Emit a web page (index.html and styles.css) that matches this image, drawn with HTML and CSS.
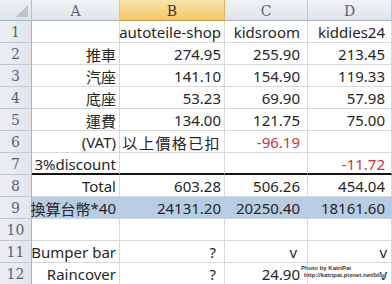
FILE: index.html
```html
<!DOCTYPE html>
<html>
<head>
<meta charset="utf-8">
<link rel="stylesheet" href="styles.css">
</head>
<body>
<div class="sheet">
  <div class="corner"><span class="tri"></span></div>
  <div class="colhead">A</div>
  <div class="colhead active">B</div>
  <div class="colhead">C</div>
  <div class="colhead">D</div>

  <div class="rowhead">1</div>
  <div class="cell"></div>
  <div class="cell">autoteile-shop</div>
  <div class="cell padc">kidsroom</div>
  <div class="cell padd">kiddies24</div>

  <div class="rowhead">2</div>
  <div class="cell"><span class="cjk">推車</span></div>
  <div class="cell">274.95</div>
  <div class="cell padc">255.90</div>
  <div class="cell padd">213.45</div>

  <div class="rowhead">3</div>
  <div class="cell"><span class="cjk">汽座</span></div>
  <div class="cell">141.10</div>
  <div class="cell padc">154.90</div>
  <div class="cell padd">119.33</div>

  <div class="rowhead">4</div>
  <div class="cell"><span class="cjk">底座</span></div>
  <div class="cell">53.23</div>
  <div class="cell padc">69.90</div>
  <div class="cell padd">57.98</div>

  <div class="rowhead">5</div>
  <div class="cell"><span class="cjk">運費</span></div>
  <div class="cell">134.00</div>
  <div class="cell padc">121.75</div>
  <div class="cell padd">75.00</div>

  <div class="rowhead">6</div>
  <div class="cell">(VAT)</div>
  <div class="cell"><span class="cjk wide">以上價格已扣</span></div>
  <div class="cell padc red">-96.19</div>
  <div class="cell padd"></div>

  <div class="rowhead">7</div>
  <div class="cell thick">3%discount</div>
  <div class="cell thick"></div>
  <div class="cell padc thick"></div>
  <div class="cell padd thick red">-11.72</div>

  <div class="rowhead">8</div>
  <div class="cell">Total</div>
  <div class="cell">603.28</div>
  <div class="cell padc">506.26</div>
  <div class="cell padd">454.04</div>

  <div class="rowhead">9</div>
  <div class="cell sel"><span class="cjk">換算台幣</span>*40</div>
  <div class="cell sel">24131.20</div>
  <div class="cell padc sel">20250.40</div>
  <div class="cell padd sel">18161.60</div>

  <div class="rowhead">10</div>
  <div class="cell"></div>
  <div class="cell"></div>
  <div class="cell padc"></div>
  <div class="cell padd"></div>

  <div class="rowhead">11</div>
  <div class="cell">Bumper bar</div>
  <div class="cell padq">?</div>
  <div class="cell padv">v</div>
  <div class="cell padv2">v</div>

  <div class="rowhead">12</div>
  <div class="cell">Raincover</div>
  <div class="cell padq">?</div>
  <div class="cell padc">24.90</div>
  <div class="cell padv2">v</div>

  <div class="watermark">
    <div class="wm1">Photo by KatriPai</div>
    <div class="wm2">http://katripai.pixnet.net/blog</div>
  </div>
</div>
</body>
</html>
```
FILE: styles.css
```css
html, body {
  margin: 0;
  padding: 0;
  background: #ffffff;
  overflow: hidden;
}
.sheet {
  position: relative;
  display: grid;
  grid-template-columns: 32px 88px 105px 83px 84px;
  grid-template-rows: 21px repeat(12, 22px);
  width: 392px;
  height: 284px;
  overflow: hidden;
  font-family: "Noto Sans", "Noto Sans CJK TC", sans-serif;
  font-size: 15px;
  color: #262626;
}
.corner {
  position: relative;
  background: linear-gradient(#eef0f3, #dfe3e8);
  border-right: 1px solid #b7bec8;
  border-bottom: 1px solid #a9b3bf;
  box-sizing: border-box;
}
.tri {
  position: absolute;
  right: 3px;
  bottom: 3px;
  width: 0;
  height: 0;
  border-left: 12px solid transparent;
  border-bottom: 12px solid #bcc3cc;
}
.colhead {
  display: flex;
  align-items: center;
  justify-content: center;
  background: linear-gradient(#f1f3f6, #dfe3e8);
  border-right: 1px solid #c3c9d1;
  border-bottom: 1px solid #a9b3bf;
  box-sizing: border-box;
  font-family: "DejaVu Serif", serif;
  font-size: 14px;
  color: #5a6371;
  padding-top: 2px;
}
.colhead.active {
  background: linear-gradient(#fae4ac, #f4c766);
  border-right-color: #e2b15a;
  border-bottom-color: #c59a48;
  color: #3d3a33;
}
.rowhead {
  display: flex;
  align-items: center;
  justify-content: center;
  background: linear-gradient(90deg, #eceff3, #e2e6eb);
  border-right: 1px solid #a9b3bf;
  border-bottom: 1px solid #c3c9d1;
  box-sizing: border-box;
  font-family: "DejaVu Serif", serif;
  font-size: 14px;
  color: #5a6371;
  padding-top: 1px;
}
.cell {
  display: flex;
  align-items: flex-end;
  justify-content: flex-end;
  box-sizing: border-box;
  border-right: 1px solid #d8d8d8;
  border-bottom: 1px solid #d8d8d8;
  padding: 0 3px 2px 0;
  line-height: 15px;
  white-space: nowrap;
  overflow: visible;
}
.padc { padding-right: 7px; }
.padd { padding-right: 6px; }
.padq { padding-right: 8px; }
.padv { padding-right: 10px; }
.padv2 { padding-right: 4px; }
.cjk {
  font-family: "Noto Sans CJK TC", sans-serif;
  font-size: 15px;
}
.wide { letter-spacing: 1.4px; }
.red { color: #cb3440; }
.thick { border-bottom: 2px solid #151515; padding-bottom: 1px; }
.sel {
  background: #b8cce4;
  border-right-color: #b8cce4;
  border-bottom-color: #c9d7e9;
}
.watermark {
  position: absolute;
  left: 300px;
  top: 265px;
  font-family: "Liberation Sans", sans-serif;
  font-size: 6px;
  font-weight: bold;
  line-height: 7px;
  color: #3a3a3a;
  text-shadow: 0 0 1px #fff, 0 0 1px #fff, 0 0 1px #fff;
  white-space: nowrap;
}
.wm1 { padding-left: 1px; }
.wm2 { padding-left: 4px; }
```
